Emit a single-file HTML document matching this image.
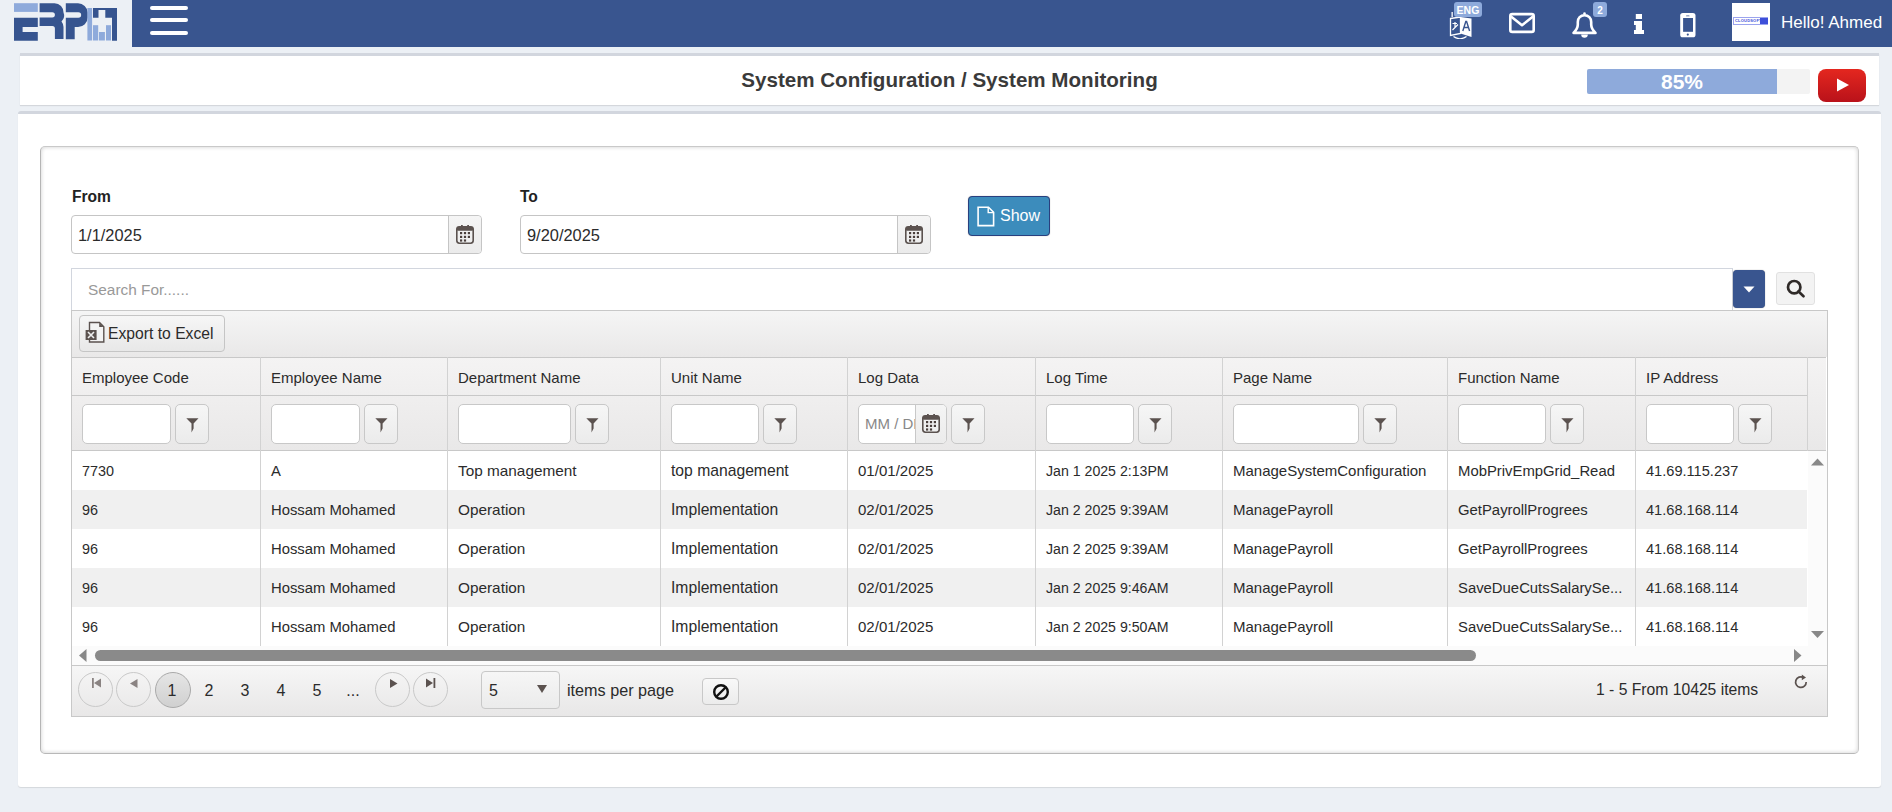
<!DOCTYPE html>
<html><head><meta charset="utf-8">
<style>
*{box-sizing:border-box;margin:0;padding:0}
html,body{width:1892px;height:812px;overflow:hidden}
body{background:#ecf0f5;font-family:"Liberation Sans",sans-serif;color:#333;position:relative}
.abs{position:absolute}
svg{display:block}
#nav{left:132px;top:0;width:1760px;height:47px;background:#39558f}
#logo{left:0;top:0;width:132px;height:47px;background:#ecf0f5}
.burger{left:150px;width:38px;height:4px;background:#fff;border-radius:2px}
.badge{background:#8eaadb;color:#fff;font-weight:700;border-radius:3px;text-align:center}
#hello{left:1781px;top:0;line-height:45px;font-size:17px;color:#fff;white-space:nowrap}
#titlep{left:20px;top:53px;width:1859px;height:52px;background:#fff;border-top:3px solid #d2d6de;box-shadow:0 1px 1px rgba(0,0,0,.1)}
#title{left:0;top:12px;width:1859px;text-align:center;font-size:20.6px;font-weight:700;color:#3a3a3a;white-space:nowrap}
#prog{left:1587px;top:69px;width:223px;height:25px;background:#f3f3f3;border-radius:2px}
#progbar{left:0;top:0;width:190px;height:25px;background:#8eaadb;border-radius:2px 0 0 2px;color:#fff;font-weight:700;font-size:21px;text-align:center;line-height:25px}
#yt{left:1818px;top:69px;width:48px;height:33px;border-radius:8px;background:linear-gradient(#e4271f,#b9121a)}
#mainp{left:18px;top:111px;width:1863px;height:676px;background:#fff;border-top:3px solid #d2d6de;border-radius:3px;box-shadow:0 1px 1px rgba(0,0,0,.1)}
#innerp{left:40px;top:146px;width:1819px;height:608px;border:1px solid #c9c9c9;border-left-color:#b5b5b5;border-bottom-color:#b8b8b8;border-radius:5px;box-shadow:inset 0 0 4px rgba(0,0,0,.2)}
.lbl{font-weight:700;font-size:15.6px;color:#222;white-space:nowrap}
.dinput{height:39px;border:1px solid #c5c5c5;border-radius:4px;background:#fff}
.dinput .txt{left:6px;top:0;line-height:38px;font-size:16.4px;color:#2b2b2b}
.dinput .add{right:0;top:0;width:33px;height:37px;border-left:1px solid #c5c5c5;background:linear-gradient(#f5f5f5,#ebebeb);border-radius:0 4px 4px 0}
.dinput .add svg{position:absolute;left:7px;top:9px}
#showbtn{left:968px;top:196px;width:82px;height:40px;background:#3c8cbc;border:1px solid #29407f;box-shadow:0 0 1px rgba(0,0,0,.4);border-radius:4px;color:#fff;font-size:16px}
#search{left:71px;top:268px;width:1662px;height:42px;border:1px solid #d2d6de;border-bottom:none;background:#fff}
#search .ph{left:16px;top:0;line-height:41px;font-size:15.4px;color:#999;white-space:nowrap}
#ddbtn{left:1733px;top:270px;width:32px;height:38px;background:#39558f;border-radius:4px;box-shadow:0 0 1px rgba(0,0,0,.5)}
#sbtn{left:1776px;top:272px;width:39px;height:33px;background:#f3f3f3;border:1px solid #e1e1e1;border-radius:3px}
#grid{left:71px;top:310px;width:1757px;height:407px;border:1px solid #c8c8c8;background:#fff}
#toolbar{left:72px;top:311px;width:1755px;height:46px;background:linear-gradient(#f5f5f5,#e9e8e8)}
#expbtn{left:79px;top:315px;width:146px;height:37px;border:1px solid #c5c5c5;border-radius:4px;background:linear-gradient(#f6f6f6,#e8e8e8);font-size:15.7px;color:#2b2b2b}
.hdr{background:linear-gradient(#f4f3f3,#e9e8e8)}
.hl{height:1px;background:#c8c8c8}
.vl{width:1px;background:#d2d2d2}
.cell{line-height:39px;font-size:15px;color:#2b2b2b;white-space:nowrap}
.hcell{line-height:38px;font-size:15px;color:#2b2b2b;white-space:nowrap}
.finp{height:40px;border:1px solid #c8c8c8;border-radius:5px;background:#fff;overflow:hidden}
.dph{left:6px;top:0;line-height:38px;font-size:15px;color:#888;white-space:nowrap;width:52px;overflow:hidden}
.fcal{left:56px;top:-1px;width:33px;height:40px;border-left:1px solid #c8c8c8;background:linear-gradient(#f5f5f5,#ebebeb)}
.fcal svg{position:absolute;left:6px;top:9.5px}
.fbtn{width:34px;height:40px;border:1px solid #c8c8c8;border-radius:5px;background:linear-gradient(#f6f6f6,#ebebeb)}
.fbtn svg{position:absolute;left:10px;top:13px}
#vscroll{left:1808px;top:451px;width:19px;height:195px;background:#fbfbfb}
#hscroll{left:72px;top:646px;width:1755px;height:19px;background:#fbfbfb}
#thumb{left:95px;top:650px;width:1381px;height:11px;background:#8a8a8a;border-radius:6px}
#pager{left:72px;top:665px;width:1755px;height:51px;background:linear-gradient(#f6f6f6,#e8e7e7);border-top:1px solid #c8c8c8}
.pcirc{width:35px;height:35px;border:1px solid #c9c9c9;border-radius:50%}
.pnum{font-size:16px;color:#2b2b2b;line-height:20px;text-align:center;width:20px}
</style></head><body>
<div id="logo" class="abs">
<svg class="abs" style="left:0;top:0" width="132" height="47" viewBox="0 0 132 47">
 <rect x="14" y="3.2" width="23.8" height="8.7" fill="#8eaadb"/>
 <path d="M14 17.8H37.8V26.9H22.6V32H37.8V40.7H14Z" fill="#36548f"/>
 <path d="M39.6 3.2H54.5A9 9 0 0 1 63.5 12.6A8 8 0 0 1 61.5 21.5A9 9 0 0 1 63.5 27V39H54.9V28.5A2.5 2.5 0 0 0 52.4 26H39.6V17.4H52.3A2.6 2.6 0 0 0 52.3 12.2H39.6Z" fill="#36548f"/>
 <path d="M65.8 3.3H78A9.8 9.8 0 0 1 87.7 12.5V17.5A9.6 9.6 0 0 1 78 27H74.7V39.3H65.8V17.7H78.4A2.75 2.75 0 0 0 78.4 12.2H65.8Z" fill="#36548f"/>
 <rect x="87.4" y="8" width="4.7" height="32.5" fill="#8eaadb"/>
 <path d="M93 8H117V40.7H112V17.7H105.3V10H98.5V17.7H93Z" fill="#36548f"/>
 <rect x="93" y="25.2" width="5.2" height="15.3" fill="#8eaadb"/>
 <rect x="99" y="32" width="5.9" height="8.5" fill="#8eaadb"/>
 <rect x="106" y="25.2" width="5" height="15.3" fill="#8eaadb"/>
</svg>
</div>
<div id="nav" class="abs"></div>
<div class="abs burger" style="top:6px"></div>
<div class="abs burger" style="top:18px"></div>
<div class="abs burger" style="top:31px"></div>

<!-- translate icon -->
<svg class="abs" style="left:1449px;top:11px" width="25" height="28" viewBox="0 0 25 28">
 <path d="M1.5 7.5L11.5 6V22.5L1.5 24.5Z" fill="none" stroke="#fff" stroke-width="1.3"/>
 <path d="M11.5 6L22.5 7.5V26L11.5 22.5Z" fill="#fff"/>
 <path d="M3.5 12.5H8M6 11V17M3.5 19L9 13.5" fill="none" stroke="#fff" stroke-width="1.2"/>
 <path d="M13.8 20L16.8 10.5H17.6L20.6 20M15 16.5H19.5" fill="none" stroke="#39558f" stroke-width="1.4"/>
 <path d="M4.5 25.5Q11 30 17.5 25.5" fill="none" stroke="#fff" stroke-width="1.2"/>
 <rect x="2.5" y="1" width="1.3" height="5" fill="#fff"/>
</svg>
<div class="abs badge" style="left:1454px;top:2px;width:28px;height:15px;font-size:10.5px;line-height:17px">ENG</div>
<!-- envelope -->
<svg class="abs" style="left:1508px;top:12px" width="28" height="22" viewBox="0 0 28 22">
 <rect x="2.3" y="2.1" width="23.4" height="17.8" rx="2" fill="none" stroke="#fff" stroke-width="2.6"/>
 <path d="M3 4.5L14 13.2L25 4.5" fill="none" stroke="#fff" stroke-width="2.6" stroke-linejoin="round"/>
</svg>
<!-- bell -->
<svg class="abs" style="left:1571px;top:11px" width="27" height="28" viewBox="0 0 27 28">
 <path d="M13.5 4.2C9.5 4.2 6.8 7.3 6.8 11V13.5C6.8 17 5 19.5 2.5 21.9H24.5C22 19.5 20.2 17 20.2 13.5V11C20.2 7.3 17.5 4.2 13.5 4.2Z" fill="none" stroke="#fff" stroke-width="2.6" stroke-linejoin="round"/>
 <circle cx="13.5" cy="2.6" r="1.3" fill="#fff"/>
 <path d="M10.2 23.5A3.3 3.3 0 0 0 16.8 23.5Z" fill="#fff"/>
</svg>
<div class="abs badge" style="left:1593px;top:2px;width:14px;height:15px;font-size:10px;line-height:17px">2</div>
<!-- info -->
<svg class="abs" style="left:1633px;top:13px" width="12" height="22" viewBox="0 0 12 22">
 <rect x="2.8" y="1" width="6.2" height="5" fill="#fff"/>
 <path d="M1 8H9V17H11V21H1V17H2.8V12H1Z" fill="#fff"/>
</svg>
<!-- phone -->
<svg class="abs" style="left:1680px;top:12px" width="16" height="26" viewBox="0 0 16 26">
 <rect x="0.2" y="0.9" width="15.3" height="24.4" rx="2.6" fill="#fff"/>
 <rect x="3.1" y="6" width="9.9" height="13.8" fill="#39558f"/>
 <circle cx="7.8" cy="22.6" r="1.1" fill="#39558f"/>
 <rect x="6" y="3.5" width="3.6" height="0.8" rx="0.4" fill="#39558f"/>
</svg>
<!-- avatar -->
<div class="abs" style="left:1732px;top:3px;width:38px;height:38px;background:#fff">
 <div class="abs" style="left:1.3px;top:14.3px;width:34.7px;height:7.4px;border:1px solid #9aa3ee;background:#fff"></div>
 <div class="abs" style="left:3px;top:16px;width:24px;height:4px;font-size:4px;line-height:4px;color:#3d4fd9;font-weight:700;letter-spacing:.2px;white-space:nowrap">CLOUDSOFT</div>
 <div class="abs" style="left:28px;top:15px;width:8px;height:6.4px;background:#3d4fd9"></div>
</div>
<div id="hello" class="abs">Hello! Ahmed</div>

<div id="titlep" class="abs"><div id="title" class="abs">System Configuration / System Monitoring</div></div>
<div id="prog" class="abs"><div id="progbar" class="abs">85%</div></div>
<div id="yt" class="abs"><svg class="abs" style="left:18px;top:9px" width="14" height="14" viewBox="0 0 14 14"><path d="M1 0.5L13 7L1 13.5Z" fill="#fff"/></svg></div>

<div id="mainp" class="abs"></div>
<div id="innerp" class="abs"></div>

<div class="abs lbl" style="left:72px;top:188px">From</div>
<div class="abs dinput" style="left:71px;top:215px;width:411px"><div class="abs txt">1/1/2025</div><div class="abs add"><svg width="18" height="19" viewBox="0 0 18 19"><rect x="0.8" y="1.8" width="16.4" height="16.4" rx="2.6" fill="none" stroke="#5b524f" stroke-width="1.6"/><rect x="0.8" y="1.8" width="16.4" height="4" rx="1.5" fill="#5b524f"/><rect x="5" y="0" width="1.8" height="3.2" fill="#5b524f"/><rect x="11.2" y="0" width="1.8" height="3.2" fill="#5b524f"/><g fill="#4a3f3c"><rect x="4" y="7" width="2.2" height="2.2"/><rect x="7.9" y="7" width="2.2" height="2.2"/><rect x="11.8" y="7" width="2.2" height="2.2"/><rect x="4" y="10.8" width="2.2" height="2.2"/><rect x="7.9" y="10.8" width="2.2" height="2.2"/><rect x="11.8" y="10.8" width="2.2" height="2.2"/><rect x="4" y="14.4" width="2.2" height="2.2"/><rect x="7.9" y="14.4" width="2.2" height="2.2"/></g></svg></div></div>
<div class="abs lbl" style="left:520px;top:188px">To</div>
<div class="abs dinput" style="left:520px;top:215px;width:411px"><div class="abs txt">9/20/2025</div><div class="abs add"><svg width="18" height="19" viewBox="0 0 18 19"><rect x="0.8" y="1.8" width="16.4" height="16.4" rx="2.6" fill="none" stroke="#5b524f" stroke-width="1.6"/><rect x="0.8" y="1.8" width="16.4" height="4" rx="1.5" fill="#5b524f"/><rect x="5" y="0" width="1.8" height="3.2" fill="#5b524f"/><rect x="11.2" y="0" width="1.8" height="3.2" fill="#5b524f"/><g fill="#4a3f3c"><rect x="4" y="7" width="2.2" height="2.2"/><rect x="7.9" y="7" width="2.2" height="2.2"/><rect x="11.8" y="7" width="2.2" height="2.2"/><rect x="4" y="10.8" width="2.2" height="2.2"/><rect x="7.9" y="10.8" width="2.2" height="2.2"/><rect x="11.8" y="10.8" width="2.2" height="2.2"/><rect x="4" y="14.4" width="2.2" height="2.2"/><rect x="7.9" y="14.4" width="2.2" height="2.2"/></g></svg></div></div>
<div id="showbtn" class="abs">
 <svg class="abs" style="left:8px;top:9px" width="18" height="21" viewBox="0 0 18 21"><path d="M1.1 1.2H11.5L16.6 6.3V19.6H1.1Z" fill="none" stroke="#fff" stroke-width="1.6"/><path d="M11.2 1.5V6.6H16.3" fill="none" stroke="#fff" stroke-width="1.4"/></svg>
 <div class="abs" style="left:31px;top:0;line-height:38px;font-size:16px;color:#fff">Show</div>
</div>

<div id="search" class="abs"><div class="abs ph">Search For......</div></div>
<div id="ddbtn" class="abs"><svg class="abs" style="left:10px;top:16px" width="12" height="7" viewBox="0 0 12 7"><path d="M0.5 0.5H11.5L6 6.5Z" fill="#fff"/></svg></div>
<div id="sbtn" class="abs"><svg class="abs" style="left:9px;top:6px" width="20" height="19" viewBox="0 0 20 19"><circle cx="8.2" cy="8.2" r="6.2" fill="none" stroke="#2f2a28" stroke-width="2.7"/><path d="M12.3 12.3L17.5 17.3" stroke="#2f2a28" stroke-width="2.6" stroke-linecap="round"/></svg></div>

<div id="grid" class="abs"></div>
<div id="toolbar" class="abs"></div>
<div id="expbtn" class="abs">
 <svg class="abs" style="left:5px;top:5px" width="21" height="22" viewBox="0 0 21 22"><path d="M4.5 1.5H14.5L18.8 5.8V21H4.5Z" fill="#f3f3f3" stroke="#5b524f" stroke-width="1.4"/><path d="M14.2 1.8V6H18.5Z" fill="#5b524f"/><rect x="0.6" y="9" width="11" height="10" fill="#5b524f"/><path d="M3 11L9 17M9 11L3 17" stroke="#eee" stroke-width="1.6"/></svg>
 <div class="abs" style="left:28px;top:0;line-height:35px;font-size:15.7px;color:#2b2b2b;white-space:nowrap">Export to Excel</div>
</div>
<div class="abs hdr" style="left:72px;top:357px;width:1754px;height:94px"></div>
<div class="abs hl" style="left:72px;top:357px;width:1754px"></div>
<div class="abs hl" style="left:72px;top:395px;width:1735px"></div>
<div class="abs hl" style="left:72px;top:450px;width:1754px"></div>
<div class="abs" style="left:72px;top:451px;width:1735px;height:39px;background:#fff"></div>
<div class="abs cell" style="left:82px;top:451px"><span style="font-size:14.4px;line-height:1">7730</span></div>
<div class="abs cell" style="left:271px;top:451px"><span style="font-size:14.84px;line-height:1">A</span></div>
<div class="abs cell" style="left:458px;top:451px"><span style="font-size:15.35px;line-height:1">Top management</span></div>
<div class="abs cell" style="left:671px;top:451px"><span style="font-size:15.7px;line-height:1">top management</span></div>
<div class="abs cell" style="left:858px;top:451px"><span style="font-size:15.05px;line-height:1">01/01/2025</span></div>
<div class="abs cell" style="left:1046px;top:451px"><span style="font-size:14.15px;line-height:1">Jan 1 2025 2:13PM</span></div>
<div class="abs cell" style="left:1233px;top:451px"><span style="font-size:15.0px;line-height:1">ManageSystemConfiguration</span></div>
<div class="abs cell" style="left:1458px;top:451px"><span style="font-size:14.87px;line-height:1">MobPrivEmpGrid_Read</span></div>
<div class="abs cell" style="left:1646px;top:451px"><span style="font-size:14.6px;line-height:1">41.69.115.237</span></div>
<div class="abs" style="left:72px;top:490px;width:1735px;height:39px;background:#f0f0f0"></div>
<div class="abs cell" style="left:82px;top:490px"><span style="font-size:14.4px;line-height:1">96</span></div>
<div class="abs cell" style="left:271px;top:490px"><span style="font-size:14.84px;line-height:1">Hossam Mohamed</span></div>
<div class="abs cell" style="left:458px;top:490px"><span style="font-size:15.35px;line-height:1">Operation</span></div>
<div class="abs cell" style="left:671px;top:490px"><span style="font-size:15.7px;line-height:1">Implementation</span></div>
<div class="abs cell" style="left:858px;top:490px"><span style="font-size:15.05px;line-height:1">02/01/2025</span></div>
<div class="abs cell" style="left:1046px;top:490px"><span style="font-size:14.15px;line-height:1">Jan 2 2025 9:39AM</span></div>
<div class="abs cell" style="left:1233px;top:490px"><span style="font-size:15.0px;line-height:1">ManagePayroll</span></div>
<div class="abs cell" style="left:1458px;top:490px"><span style="font-size:14.87px;line-height:1">GetPayrollProgrees</span></div>
<div class="abs cell" style="left:1646px;top:490px"><span style="font-size:14.6px;line-height:1">41.68.168.114</span></div>
<div class="abs" style="left:72px;top:529px;width:1735px;height:39px;background:#fff"></div>
<div class="abs cell" style="left:82px;top:529px"><span style="font-size:14.4px;line-height:1">96</span></div>
<div class="abs cell" style="left:271px;top:529px"><span style="font-size:14.84px;line-height:1">Hossam Mohamed</span></div>
<div class="abs cell" style="left:458px;top:529px"><span style="font-size:15.35px;line-height:1">Operation</span></div>
<div class="abs cell" style="left:671px;top:529px"><span style="font-size:15.7px;line-height:1">Implementation</span></div>
<div class="abs cell" style="left:858px;top:529px"><span style="font-size:15.05px;line-height:1">02/01/2025</span></div>
<div class="abs cell" style="left:1046px;top:529px"><span style="font-size:14.15px;line-height:1">Jan 2 2025 9:39AM</span></div>
<div class="abs cell" style="left:1233px;top:529px"><span style="font-size:15.0px;line-height:1">ManagePayroll</span></div>
<div class="abs cell" style="left:1458px;top:529px"><span style="font-size:14.87px;line-height:1">GetPayrollProgrees</span></div>
<div class="abs cell" style="left:1646px;top:529px"><span style="font-size:14.6px;line-height:1">41.68.168.114</span></div>
<div class="abs" style="left:72px;top:568px;width:1735px;height:39px;background:#f0f0f0"></div>
<div class="abs cell" style="left:82px;top:568px"><span style="font-size:14.4px;line-height:1">96</span></div>
<div class="abs cell" style="left:271px;top:568px"><span style="font-size:14.84px;line-height:1">Hossam Mohamed</span></div>
<div class="abs cell" style="left:458px;top:568px"><span style="font-size:15.35px;line-height:1">Operation</span></div>
<div class="abs cell" style="left:671px;top:568px"><span style="font-size:15.7px;line-height:1">Implementation</span></div>
<div class="abs cell" style="left:858px;top:568px"><span style="font-size:15.05px;line-height:1">02/01/2025</span></div>
<div class="abs cell" style="left:1046px;top:568px"><span style="font-size:14.15px;line-height:1">Jan 2 2025 9:46AM</span></div>
<div class="abs cell" style="left:1233px;top:568px"><span style="font-size:15.0px;line-height:1">ManagePayroll</span></div>
<div class="abs cell" style="left:1458px;top:568px"><span style="font-size:14.87px;line-height:1">SaveDueCutsSalarySe...</span></div>
<div class="abs cell" style="left:1646px;top:568px"><span style="font-size:14.6px;line-height:1">41.68.168.114</span></div>
<div class="abs" style="left:72px;top:607px;width:1735px;height:39px;background:#fff"></div>
<div class="abs cell" style="left:82px;top:607px"><span style="font-size:14.4px;line-height:1">96</span></div>
<div class="abs cell" style="left:271px;top:607px"><span style="font-size:14.84px;line-height:1">Hossam Mohamed</span></div>
<div class="abs cell" style="left:458px;top:607px"><span style="font-size:15.35px;line-height:1">Operation</span></div>
<div class="abs cell" style="left:671px;top:607px"><span style="font-size:15.7px;line-height:1">Implementation</span></div>
<div class="abs cell" style="left:858px;top:607px"><span style="font-size:15.05px;line-height:1">02/01/2025</span></div>
<div class="abs cell" style="left:1046px;top:607px"><span style="font-size:14.15px;line-height:1">Jan 2 2025 9:50AM</span></div>
<div class="abs cell" style="left:1233px;top:607px"><span style="font-size:15.0px;line-height:1">ManagePayroll</span></div>
<div class="abs cell" style="left:1458px;top:607px"><span style="font-size:14.87px;line-height:1">SaveDueCutsSalarySe...</span></div>
<div class="abs cell" style="left:1646px;top:607px"><span style="font-size:14.6px;line-height:1">41.68.168.114</span></div>
<div class="abs vl" style="left:260px;top:357px;height:289px"></div>
<div class="abs vl" style="left:447px;top:357px;height:289px"></div>
<div class="abs vl" style="left:660px;top:357px;height:289px"></div>
<div class="abs vl" style="left:847px;top:357px;height:289px"></div>
<div class="abs vl" style="left:1035px;top:357px;height:289px"></div>
<div class="abs vl" style="left:1222px;top:357px;height:289px"></div>
<div class="abs vl" style="left:1447px;top:357px;height:289px"></div>
<div class="abs vl" style="left:1635px;top:357px;height:289px"></div>
<div class="abs vl" style="left:1807px;top:357px;height:94px"></div>
<div class="abs hcell" style="left:82px;top:358.5px">Employee Code</div>
<div class="abs finp" style="left:82px;top:404px;width:89px"></div>
<div class="abs fbtn" style="left:175px;top:404px"><svg width="13" height="15" viewBox="0 0 13 15"><path d="M0.3 0.3H12.5L7.6 5.6V10.6L5.5 14.5V5.6Z" fill="#5b524f"/></svg></div>
<div class="abs hcell" style="left:271px;top:358.5px">Employee Name</div>
<div class="abs finp" style="left:271px;top:404px;width:89px"></div>
<div class="abs fbtn" style="left:364px;top:404px"><svg width="13" height="15" viewBox="0 0 13 15"><path d="M0.3 0.3H12.5L7.6 5.6V10.6L5.5 14.5V5.6Z" fill="#5b524f"/></svg></div>
<div class="abs hcell" style="left:458px;top:358.5px">Department Name</div>
<div class="abs finp" style="left:458px;top:404px;width:113px"></div>
<div class="abs fbtn" style="left:575px;top:404px"><svg width="13" height="15" viewBox="0 0 13 15"><path d="M0.3 0.3H12.5L7.6 5.6V10.6L5.5 14.5V5.6Z" fill="#5b524f"/></svg></div>
<div class="abs hcell" style="left:671px;top:358.5px">Unit Name</div>
<div class="abs finp" style="left:671px;top:404px;width:88px"></div>
<div class="abs fbtn" style="left:763px;top:404px"><svg width="13" height="15" viewBox="0 0 13 15"><path d="M0.3 0.3H12.5L7.6 5.6V10.6L5.5 14.5V5.6Z" fill="#5b524f"/></svg></div>
<div class="abs hcell" style="left:858px;top:358.5px">Log Data</div>
<div class="abs finp" style="left:858px;top:404px;width:89px"><div class="abs dph">MM / DD</div><div class="abs fcal"><svg width="18" height="19" viewBox="0 0 18 19"><rect x="0.8" y="1.8" width="16.4" height="16.4" rx="2.6" fill="none" stroke="#5b524f" stroke-width="1.6"/><rect x="0.8" y="1.8" width="16.4" height="4" rx="1.5" fill="#5b524f"/><rect x="5" y="0" width="1.8" height="3.2" fill="#5b524f"/><rect x="11.2" y="0" width="1.8" height="3.2" fill="#5b524f"/><g fill="#4a3f3c"><rect x="4" y="7" width="2.2" height="2.2"/><rect x="7.9" y="7" width="2.2" height="2.2"/><rect x="11.8" y="7" width="2.2" height="2.2"/><rect x="4" y="10.8" width="2.2" height="2.2"/><rect x="7.9" y="10.8" width="2.2" height="2.2"/><rect x="11.8" y="10.8" width="2.2" height="2.2"/><rect x="4" y="14.4" width="2.2" height="2.2"/><rect x="7.9" y="14.4" width="2.2" height="2.2"/></g></svg></div></div>
<div class="abs fbtn" style="left:951px;top:404px"><svg width="13" height="15" viewBox="0 0 13 15"><path d="M0.3 0.3H12.5L7.6 5.6V10.6L5.5 14.5V5.6Z" fill="#5b524f"/></svg></div>
<div class="abs hcell" style="left:1046px;top:358.5px">Log Time</div>
<div class="abs finp" style="left:1046px;top:404px;width:88px"></div>
<div class="abs fbtn" style="left:1138px;top:404px"><svg width="13" height="15" viewBox="0 0 13 15"><path d="M0.3 0.3H12.5L7.6 5.6V10.6L5.5 14.5V5.6Z" fill="#5b524f"/></svg></div>
<div class="abs hcell" style="left:1233px;top:358.5px">Page Name</div>
<div class="abs finp" style="left:1233px;top:404px;width:126px"></div>
<div class="abs fbtn" style="left:1363px;top:404px"><svg width="13" height="15" viewBox="0 0 13 15"><path d="M0.3 0.3H12.5L7.6 5.6V10.6L5.5 14.5V5.6Z" fill="#5b524f"/></svg></div>
<div class="abs hcell" style="left:1458px;top:358.5px">Function Name</div>
<div class="abs finp" style="left:1458px;top:404px;width:88px"></div>
<div class="abs fbtn" style="left:1550px;top:404px"><svg width="13" height="15" viewBox="0 0 13 15"><path d="M0.3 0.3H12.5L7.6 5.6V10.6L5.5 14.5V5.6Z" fill="#5b524f"/></svg></div>
<div class="abs hcell" style="left:1646px;top:358.5px">IP Address</div>
<div class="abs finp" style="left:1646px;top:404px;width:88px"></div>
<div class="abs fbtn" style="left:1738px;top:404px"><svg width="13" height="15" viewBox="0 0 13 15"><path d="M0.3 0.3H12.5L7.6 5.6V10.6L5.5 14.5V5.6Z" fill="#5b524f"/></svg></div>
<div id="vscroll" class="abs"></div>
<svg class="abs" style="left:1811px;top:458px" width="13" height="8" viewBox="0 0 13 8"><path d="M0 7.5H13L6.5 0.5Z" fill="#888"/></svg>
<svg class="abs" style="left:1811px;top:631px" width="13" height="7" viewBox="0 0 13 7"><path d="M0 0H13L6.5 7Z" fill="#888"/></svg>
<div id="hscroll" class="abs"></div>
<div id="thumb" class="abs"></div>
<svg class="abs" style="left:79px;top:649px" width="8" height="13" viewBox="0 0 8 13"><path d="M7.5 0V13L0 6.5Z" fill="#888"/></svg>
<svg class="abs" style="left:1794px;top:649px" width="8" height="13" viewBox="0 0 8 13"><path d="M0 0V13L7.5 6.5Z" fill="#888"/></svg>

<div id="pager" class="abs"></div>
<div class="abs pcirc" style="left:78px;top:672px"><svg class="abs" style="left:13px;top:5px" width="10" height="10" viewBox="0 0 10 10"><rect x="0" y="0" width="1.8" height="10" fill="#8a8382"/><path d="M9 0.5V9.5L2 5Z" fill="#8a8382"/></svg></div>
<div class="abs pcirc" style="left:116px;top:672px"><svg class="abs" style="left:13px;top:6px" width="8" height="9" viewBox="0 0 8 9"><path d="M7.5 0V9L0 4.5Z" fill="#8a8382"/></svg></div>
<div class="abs pcirc" style="left:155px;top:672px;width:36px;height:36px;background:linear-gradient(#e5e5e5,#d0d0d0);border-color:#a9a9a9"></div>
<div class="abs pnum" style="left:162px;top:681px">1</div>
<div class="abs pnum" style="left:199px;top:681px">2</div>
<div class="abs pnum" style="left:235px;top:681px">3</div>
<div class="abs pnum" style="left:271px;top:681px">4</div>
<div class="abs pnum" style="left:307px;top:681px">5</div>
<div class="abs pnum" style="left:343px;top:681px">...</div>
<div class="abs pcirc" style="left:375px;top:672px"><svg class="abs" style="left:14px;top:6px" width="8" height="9" viewBox="0 0 8 9"><path d="M0 0V9L7.5 4.5Z" fill="#5b524f"/></svg></div>
<div class="abs pcirc" style="left:413px;top:672px"><svg class="abs" style="left:12px;top:5px" width="10" height="10" viewBox="0 0 10 10"><path d="M0 0.5V9.5L7 5Z" fill="#5b524f"/><rect x="7.5" y="0" width="1.8" height="10" fill="#5b524f"/></svg></div>
<div class="abs" style="left:481px;top:671px;width:79px;height:38px;border:1px solid #c8c8c8;border-radius:4px;background:linear-gradient(#f6f6f6,#ebebeb)">
 <div class="abs" style="left:7px;top:0;line-height:37px;font-size:16px;color:#2b2b2b">5</div>
 <svg class="abs" style="left:55px;top:13px" width="10" height="8" viewBox="0 0 10 8"><path d="M0 0H10L5 8Z" fill="#5b524f"/></svg>
</div>
<div class="abs" style="left:567px;top:671px;line-height:38px;font-size:16.2px;color:#2b2b2b;white-space:nowrap">items per page</div>
<div class="abs" style="left:702px;top:678px;width:37px;height:27px;border:1px solid #c8c8c8;border-radius:4px;background:linear-gradient(#f8f8f8,#ececec)">
 <svg class="abs" style="left:9px;top:4px" width="18" height="18" viewBox="0 0 18 18"><circle cx="9" cy="9" r="6.8" fill="none" stroke="#111" stroke-width="2.4"/><path d="M4.5 13.5L13.5 4.5" stroke="#111" stroke-width="2.4"/></svg>
</div>
<div class="abs" style="left:1596px;top:671px;line-height:38px;font-size:15.7px;color:#2b2b2b;white-space:nowrap">1 - 5 From 10425 items</div>
<svg class="abs" style="left:1794px;top:674px" width="14" height="15" viewBox="0 0 14 15"><path d="M9.5 3.5A5.3 5.3 0 1 0 12.2 8" fill="none" stroke="#5b524f" stroke-width="1.7"/><path d="M7.8 0.5L12 3.5L7.8 6.2Z" fill="#5b524f"/></svg>
</body></html>
